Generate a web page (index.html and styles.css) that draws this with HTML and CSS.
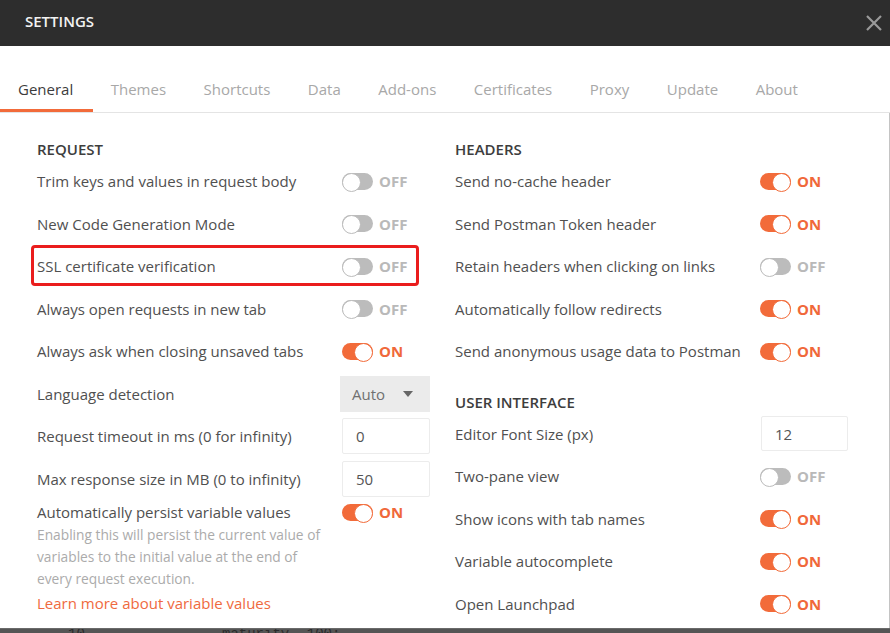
FILE: index.html
```html
<!DOCTYPE html>
<html>
<head>
<meta charset="utf-8">
<title>Settings</title>
<link rel="stylesheet" href="styles.css">
</head>
<body>
<div class="modal">
  <header class="titlebar">
    <span class="title">SETTINGS</span>
    <span class="close">
      <svg width="18" height="18" viewBox="0 0 18 18"><path d="M2 2 L16 16 M16 2 L2 16" stroke="#9a9a9a" stroke-width="2.2" fill="none"/></svg>
    </span>
  </header>
  <nav class="tabs">
    <span class="tab active">General</span>
    <span class="tab">Themes</span>
    <span class="tab">Shortcuts</span>
    <span class="tab">Data</span>
    <span class="tab">Add-ons</span>
    <span class="tab">Certificates</span>
    <span class="tab">Proxy</span>
    <span class="tab">Update</span>
    <span class="tab">About</span>
  </nav>
  <main class="content">
    <section class="col">
      <h3 class="section-title">REQUEST</h3>
      <div class="row"><span class="label">Trim keys and values in request body</span><span class="toggle off"><i class="track"></i><b>OFF</b></span></div>
      <div class="row"><span class="label">New Code Generation Mode</span><span class="toggle off"><i class="track"></i><b>OFF</b></span></div>
      <div class="row highlighted"><span class="label">SSL certificate verification</span><span class="toggle off"><i class="track"></i><b>OFF</b></span><span class="mark"></span></div>
      <div class="row"><span class="label">Always open requests in new tab</span><span class="toggle off"><i class="track"></i><b>OFF</b></span></div>
      <div class="row"><span class="label">Always ask when closing unsaved tabs</span><span class="toggle on"><i class="track"></i><b>ON</b></span></div>
      <div class="row"><span class="label">Language detection</span><span class="select">Auto<i class="caret"></i></span></div>
      <div class="row"><span class="label">Request timeout in ms (0 for infinity)</span><span class="input">0</span></div>
      <div class="row"><span class="label">Max response size in MB (0 to infinity)</span><span class="input">50</span></div>
      <div class="persist">
        <div class="persist-head"><span class="label">Automatically persist variable values</span><span class="toggle on"><i class="track"></i><b>ON</b></span></div>
        <p class="help">Enabling this will persist the current value of variables to the initial value at the end of every request execution.</p>
        <a class="link">Learn more about variable values</a>
      </div>
    </section>
    <section class="col">
      <h3 class="section-title">HEADERS</h3>
      <div class="row"><span class="label">Send no-cache header</span><span class="toggle on"><i class="track"></i><b>ON</b></span></div>
      <div class="row"><span class="label">Send Postman Token header</span><span class="toggle on"><i class="track"></i><b>ON</b></span></div>
      <div class="row"><span class="label">Retain headers when clicking on links</span><span class="toggle off"><i class="track"></i><b>OFF</b></span></div>
      <div class="row"><span class="label">Automatically follow redirects</span><span class="toggle on"><i class="track"></i><b>ON</b></span></div>
      <div class="row"><span class="label">Send anonymous usage data to Postman</span><span class="toggle on"><i class="track"></i><b>ON</b></span></div>
      <h3 class="section-title second">USER INTERFACE</h3>
      <div class="row"><span class="label">Editor Font Size (px)</span><span class="input small">12</span></div>
      <div class="row"><span class="label">Two-pane view</span><span class="toggle off"><i class="track"></i><b>OFF</b></span></div>
      <div class="row"><span class="label">Show icons with tab names</span><span class="toggle on"><i class="track"></i><b>ON</b></span></div>
      <div class="row"><span class="label">Variable autocomplete</span><span class="toggle on"><i class="track"></i><b>ON</b></span></div>
      <div class="row"><span class="label">Open Launchpad</span><span class="toggle on"><i class="track"></i><b>ON</b></span></div>
    </section>
  </main>
</div>
<div class="under"><span class="u1">10</span><span class="u2">maturity</span><span class="u3">. 100;</span></div>
</body>
</html>
```
FILE: styles.css
```css
* { box-sizing: border-box; }
html, body { margin: 0; padding: 0; }
body {
  width: 890px;
  height: 633px;
  overflow: hidden;
  background: #585858;
  font-family: "Open Sans", "Liberation Sans", sans-serif;
  font-size: 15px;
  color: #505050;
}
.modal {
  width: 890px;
  height: 628px;
  background: #fff;
  display: flex;
  flex-direction: column;
  overflow: hidden;
}
.titlebar {
  height: 46px;
  flex: none;
  background: #2d2d2d;
  display: flex;
  align-items: center;
  justify-content: space-between;
  padding: 0 7px 4px 25px;
}
.title {
  color: #f2f2f2;
  font-weight: 600;
  font-size: 15px;
}
.close { display: flex; padding-top: 4px; }
.tabs {
  flex: none;
  margin-top: 20px;
  height: 47px;
  display: flex;
  border-bottom: 1px solid #e4e4e4;
}
.tab {
  padding: 2px 19.5px 0 18px;
  height: 46px;
  display: flex;
  align-items: center;
  color: #a8a8a8;
  font-size: 15px;
  border-bottom: 3px solid transparent;
}
.tab.active {
  color: #3c3c3c;
  border-bottom-color: #f26b3a;
}
.content {
  flex: 1;
  display: flex;
  gap: 25px;
  padding: 26px 0 0 37px;
  border-right: 1px solid #c4c4c4;
}
.col {
  width: 393px;
  display: flex;
  flex-direction: column;
}
.section-title {
  margin: 0;
  height: 21px;
  line-height: 20px;
  font-size: 15px;
  font-weight: 600;
  color: #3d3d3d;
}
.section-title.second { margin-top: 19px; }
.row {
  position: relative;
  height: 42.5px;
  flex: none;
  display: flex;
  align-items: center;
  justify-content: space-between;
}
.label { color: #505050; white-space: nowrap; }
.toggle {
  width: 88px;
  display: flex;
  align-items: center;
  gap: 6px;
}
.toggle b {
  font-weight: 700;
  font-size: 15px;
}
.track {
  position: relative;
  width: 31px;
  height: 17px;
  border-radius: 9px;
  display: block;
}
.track::after {
  content: "";
  position: absolute;
  top: 0;
  width: 17px;
  height: 17px;
  border-radius: 50%;
  background: #fff;
}
.toggle.off .track { background: #bcbcbc; }
.toggle.off .track::after { left: 0; border: 1px solid #bcbcbc; }
.toggle.off b { color: #b9b9b9; }
.toggle.on .track { background: #f26b3a; }
.toggle.on .track::after { right: 0; border: 1.5px solid #f26b3a; }
.toggle.on b { color: #f0683a; }
.select {
  width: 90px;
  height: 36px;
  margin-top: 1px;
  margin-left: -2px;
  background: #ebebeb;
  display: flex;
  align-items: center;
  justify-content: space-between;
  padding: 0 17px 0 12px;
  color: #707070;
}
.caret {
  width: 0; height: 0;
  border-left: 5px solid transparent;
  border-right: 5px solid transparent;
  border-top: 6px solid #666;
}
.input {
  width: 88px;
  height: 36px;
  border: 1px solid #ececec;
  border-radius: 2px;
  display: flex;
  align-items: center;
  padding-left: 13px;
  color: #555;
}
.input.small { width: 87px; height: 35px; }
.mark {
  position: absolute;
  left: -6px;
  right: 11px;
  top: 0;
  height: 41px;
  border: 3px solid #ea1d1d;
  border-radius: 4px;
  pointer-events: none;
}
.persist { display: flex; flex-direction: column; }
.persist-head {
  height: 24px;
  display: flex;
  align-items: center;
  justify-content: space-between;
}
.help {
  margin: 0;
  width: 288px;
  line-height: 22px;
  color: #ababab;
  font-size: 13.75px;
}
.link {
  margin-top: 2px;
  line-height: 22px;
  color: #ef6a3e;
}
.under {
  height: 5px;
  position: relative;
  overflow: hidden;
  background: #555;
  border-top: 1px solid #6a6a6a;
  font-family: "Liberation Mono", monospace;
  font-size: 14px;
  color: #2a2a2a;
}
.under span { position: absolute; top: -3px; }
.under .u1 { left: 68px; }
.under .u2 { left: 222px; }
.under .u3 { left: 290px; }
```
